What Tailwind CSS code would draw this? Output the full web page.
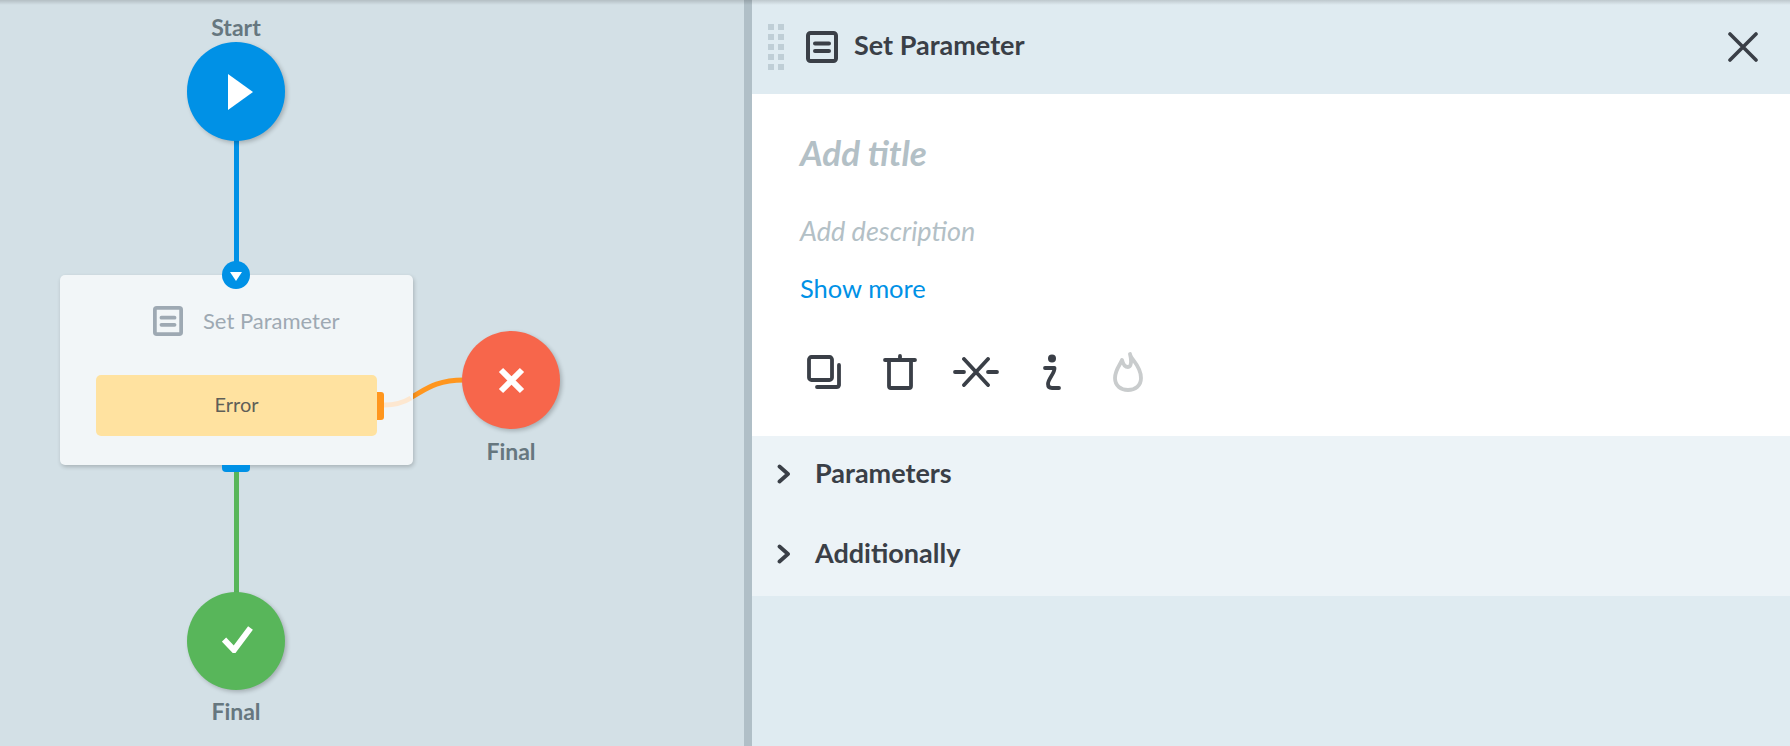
<!DOCTYPE html>
<html lang="en">
<head>
<meta charset="utf-8">
<script src="https://cdn.jsdelivr.net/npm/@tailwindcss/browser@4"></script>
<title>Set Parameter</title>
</head>
<body class="m-0 overflow-hidden">
<div class="relative flex w-[1790px] h-[746px] bg-[#dfebf1] font-['Lato','Noto_Sans',sans-serif] text-[#3a3f47]">
  <!-- Canvas -->
  <div class="relative w-[744px] h-full shrink-0 bg-[#d3e0e6]">
    <svg class="absolute left-0 top-0" width="744" height="746" fill="none">
      <path d="M236.500 140V265" stroke="#0091e6" stroke-width="5"/>
      <path d="M236.500 470V594" stroke="#58b65a" stroke-width="5"/>
      <path d="M410 398C425 390 435 380 464 380" stroke="#ff961e" stroke-width="5"/>
    </svg>

    <div class="absolute left-[166px] top-[13px] w-[140px] text-center text-[23px] leading-[28px] font-bold text-[#66777f]">Start</div>
    <div class="absolute left-[187px] top-[42px] w-[98px] h-[99px] rounded-full bg-[#0091e6] shadow-[2px_2px_4px_rgba(0,0,0,0.22)] flex items-center justify-center">
      <svg class="ml-[7px]" width="26" height="36" viewBox="0 0 26 36"><path d="M1 0L26 18L1 36Z" fill="#fff"/></svg>
    </div>

    <!-- Node -->
    <div class="absolute left-[60px] top-[275px] w-[353px] h-[190px] rounded-[5px] bg-[#f2f6f8] shadow-[1px_2px_4px_rgba(0,0,0,0.2)]">
      <div class="flex items-center gap-[20px] pl-[93px] pt-[31px]">
        <svg width="30" height="30" viewBox="0 0 32 32" fill="none" stroke="#9ea9b3" stroke-width="4" stroke-linecap="round"><rect x="2" y="2" width="28" height="28" rx="2"/><path d="M9 12.500H23M9 20H23"/></svg>
        <span class="text-[22px] leading-[30px] -mt-[1px] text-[#9ea9b3]">Set Parameter</span>
      </div>
      <div class="relative ml-[36px] mt-[39px] w-[281px] h-[61px] rounded-[5px] bg-[#ffe2a0] flex items-center justify-center text-[20px] text-[#5f5f58]">
        <span class="-mt-[4px]">Error</span>
        <div class="absolute left-[281px] top-[17px] w-[7px] h-[28px] rounded-r-[3px] bg-[#ff961e]"></div>
      </div>
    </div>
    <svg class="absolute left-0 top-0 pointer-events-none" width="744" height="746" fill="none">
      <path d="M384 405C395 405 403 403 411 398" stroke="#fde7d0" stroke-width="5"/>
    </svg>

    <div class="absolute left-[222px] top-[261px] w-[28px] h-[28px] rounded-full bg-[#0091e6] flex items-center justify-center">
      <svg width="12" height="9" viewBox="0 0 12 9" class="mt-[2px]"><path d="M0 0H12L6 9Z" fill="#fff"/></svg>
    </div>
    <div class="absolute left-[222px] top-[465px] w-[28px] h-[7px] rounded-b-[4px] bg-[#0091e6]"></div>

    <div class="absolute left-[462px] top-[331px] w-[98px] h-[98px] rounded-full bg-[#f7664b] shadow-[2px_2px_4px_rgba(0,0,0,0.22)] flex items-center justify-center">
      <svg width="27" height="27" viewBox="0 0 27 27"><path d="M3 3L24 24M24 3L3 24" stroke="#fff" stroke-width="6"/></svg>
    </div>
    <div class="absolute left-[441px] top-[437px] w-[140px] text-center text-[23px] leading-[28px] font-bold text-[#66777f]">Final</div>

    <div class="absolute left-[187px] top-[592px] w-[98px] h-[98px] rounded-full bg-[#58b65a] shadow-[2px_2px_4px_rgba(0,0,0,0.22)] flex items-center justify-center">
      <svg class="ml-[3px] -mt-[3px]" width="31" height="27" viewBox="0 0 31 27" fill="none"><path d="M2 13.500L12 24L28.500 2" stroke="#fff" stroke-width="6"/></svg>
    </div>
    <div class="absolute left-[166px] top-[697px] w-[140px] text-center text-[23px] leading-[28px] font-bold text-[#66777f]">Final</div>
  </div>

  <div class="w-[8px] h-full shrink-0 bg-[#b0bfc7]"></div>

  <!-- Panel -->
  <div class="flex-1 flex flex-col">
    <header class="h-[94px] flex items-center pl-[16px] pr-[32px]">
      <div class="grid grid-cols-2 gap-x-[4px] gap-y-[4px] w-[16px]">
        <i class="size-[6px] bg-[#bfced6]"></i><i class="size-[6px] bg-[#bfced6]"></i>
        <i class="size-[6px] bg-[#bfced6]"></i><i class="size-[6px] bg-[#bfced6]"></i>
        <i class="size-[6px] bg-[#bfced6]"></i><i class="size-[6px] bg-[#bfced6]"></i>
        <i class="size-[6px] bg-[#bfced6]"></i><i class="size-[6px] bg-[#bfced6]"></i>
        <i class="size-[6px] bg-[#bfced6]"></i><i class="size-[6px] bg-[#bfced6]"></i>
      </div>
      <svg class="ml-[22px]" width="32" height="32" viewBox="0 0 32 32" fill="none" stroke="#3a3f47" stroke-width="4" stroke-linecap="round"><rect x="2" y="2" width="28" height="28" rx="2.500"/><path d="M9 12.500H23M9 20H23"/></svg>
      <span class="ml-[16px] -mt-[5px] text-[27px] font-bold leading-[32px]">Set Parameter</span>
      <svg class="ml-auto" width="30" height="30" viewBox="0 0 30 30" fill="none" stroke="#3a3f47" stroke-width="3.600" stroke-linecap="round"><path d="M2 2L28 28M28 2L2 28"/></svg>
    </header>

    <section class="h-[342px] bg-white pl-[48px] flex flex-col">
      <div class="mt-[36px] text-[35px] leading-[44px] font-bold italic text-[#b3c0c6]">Add title</div>
      <div class="mt-[40px] text-[27px] leading-[34px] italic text-[#b3c0c6]">Add description</div>
      <div class="mt-[23px] text-[25.500px] leading-[34px] text-[#0091e6]">Show more</div>
      <div class="mt-[37px] -ml-[14px] flex items-center h-[60px]">
        <div class="w-[76px] flex justify-center">
          <svg width="34" height="34" viewBox="0 0 34 34" fill="none" stroke="#3a3f47" stroke-width="3.800" stroke-linecap="round" stroke-linejoin="round"><rect x="2" y="2" width="23" height="23" rx="2.500"/><path d="M32 10V30A2.500 2.500 0 0 1 29.500 32H10"/></svg>
        </div>
        <div class="w-[76px] flex justify-center">
          <svg width="34" height="36" viewBox="0 0 34 36" fill="none" stroke="#3a3f47" stroke-width="3.800" stroke-linecap="round" stroke-linejoin="round"><path d="M2 6H32M17 2V6M6 6V32A2 2 0 0 0 8 34H26A2 2 0 0 0 28 32V6"/></svg>
        </div>
        <div class="w-[76px] flex justify-center">
          <svg width="46" height="30" viewBox="0 0 46 30" fill="none" stroke="#3a3f47" stroke-width="3.800" stroke-linecap="round"><path d="M11 2L35 28M35 2L11 28M2 15H11M35 15H44"/></svg>
        </div>
        <div class="w-[76px] flex justify-center">
          <svg width="18" height="36" viewBox="0 0 18 36" fill="none" stroke="#3a3f47" stroke-width="3.800" stroke-linecap="round" stroke-linejoin="round"><circle cx="9" cy="4.500" r="4" fill="#3a3f47" stroke="none"/><path d="M2 14H11.500C12 19 5 25 5 30C5 33 7 34 9 34H16"/></svg>
        </div>
        <div class="w-[76px] flex justify-center">
          <svg width="30" height="40" viewBox="0 0 30 40" fill="none" stroke="#c9cccd" stroke-width="3.800" stroke-linejoin="round"><path d="M17 2C18 8 28 13 28 26C28 34 22 38 15 38C8 38 2 34 2 26C2 18 7 13 9 8C10 12 12 15 15 15C18 15 19 10 17 2Z"/></svg>
        </div>
      </div>
    </section>

    <section class="bg-[#ecf3f7] h-[160px] pl-[25px]">
      <div class="h-[76px] flex items-center">
        <svg width="14" height="20" viewBox="0 0 14 20" fill="none" stroke="#3a3f47" stroke-width="3.800" stroke-linecap="round" stroke-linejoin="round"><path d="M2.500 2.500L11 10L2.500 17.500"/></svg>
        <span class="ml-[24px] -mt-[2px] text-[27px] font-bold leading-[32px]">Parameters</span>
      </div>
      <div class="h-[84px] flex items-center">
        <svg width="14" height="20" viewBox="0 0 14 20" fill="none" stroke="#3a3f47" stroke-width="3.800" stroke-linecap="round" stroke-linejoin="round"><path d="M2.500 2.500L11 10L2.500 17.500"/></svg>
        <span class="ml-[24px] -mt-[2px] text-[27px] font-bold leading-[32px]">Additionally</span>
      </div>
    </section>
  </div>

  <div class="absolute left-0 top-0 w-full h-[5px] bg-linear-to-b from-black/15 to-transparent pointer-events-none"></div>
</div>
</body>
</html>
